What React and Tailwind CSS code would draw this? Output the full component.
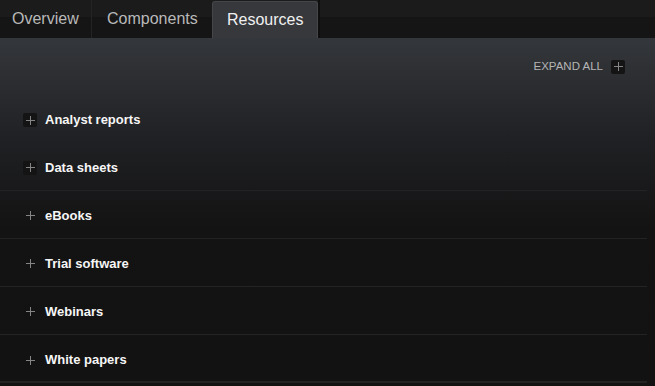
import React from "react";

const tabs = [
  { label: "Overview", w: "w-[92px] pl-[12px] border-r border-[#242424]" },
  { label: "Components", w: "w-[120px] pl-[15px]" },
  { label: "Resources", w: "w-[106px] pl-[14px]", active: true },
];
const items = [
  "Analyst reports",
  "Data sheets",
  "eBooks",
  "Trial software",
  "Webinars",
  "White papers",
];

function PlusBox({ dark }) {
  return (
    <span
      className={`flex h-[14px] w-[14px] items-center justify-center rounded-[2px] ${
        dark ? "bg-[#141414]" : ""
      }`}
    >
      <svg width="9" height="9" viewBox="0 0 9 9">
        <path d="M4.5 0v9M0 4.5h9" stroke="#858585" strokeWidth="1" />
      </svg>
    </span>
  );
}

export default function App() {
  return (
    <div className="h-[386px] w-[655px] overflow-hidden bg-[#121212] font-['Liberation_Sans',Arial,sans-serif]">
      <div className="flex h-[38px] bg-[linear-gradient(180deg,#1b1b1b_0px,#1b1b1b_17px,#151515_17px)]">
        {tabs.map((t) => (
          <div
            key={t.label}
            className={`flex items-center whitespace-nowrap text-[16px] ${t.w} ${
              t.active
                ? "mt-[1px] rounded-t-[3px] border-x border-t border-[#44464a] bg-[#36383c] text-[#f0f0f0]"
                : "text-[#b9b9b9]"
            }`}
          >
            {t.label}
          </div>
        ))}
        <div className="w-[2px] bg-[#0e0e0e]" />
      </div>
      <div className="h-[348px] bg-[linear-gradient(180deg,#34373b_0px,#202124_100px,#131313_190px,#121212_348px)] pr-[8px]">
        <div className="flex h-[57px] items-center justify-end gap-[8px] pr-[22px]">
          <span className="text-[11.5px] text-[#b4b4b4]">EXPAND ALL</span>
          <PlusBox dark />
        </div>
        {items.map((it, i) => (
          <div
            key={it}
            className={`flex h-[48px] items-center gap-[8px] pl-[23px] ${
              i === 0
                ? "pt-[2px]"
                : i === items.length - 1
                ? "border-b-2 border-[#222222] pt-[4px]"
                : "border-b border-[#232323] pt-[2px]"
            }`}
          >
            <PlusBox dark={i < 2} />
            <span className="text-[13px] font-bold text-[#f6f6f6]">{it}</span>
          </div>
        ))}
      </div>
    </div>
  );
}
